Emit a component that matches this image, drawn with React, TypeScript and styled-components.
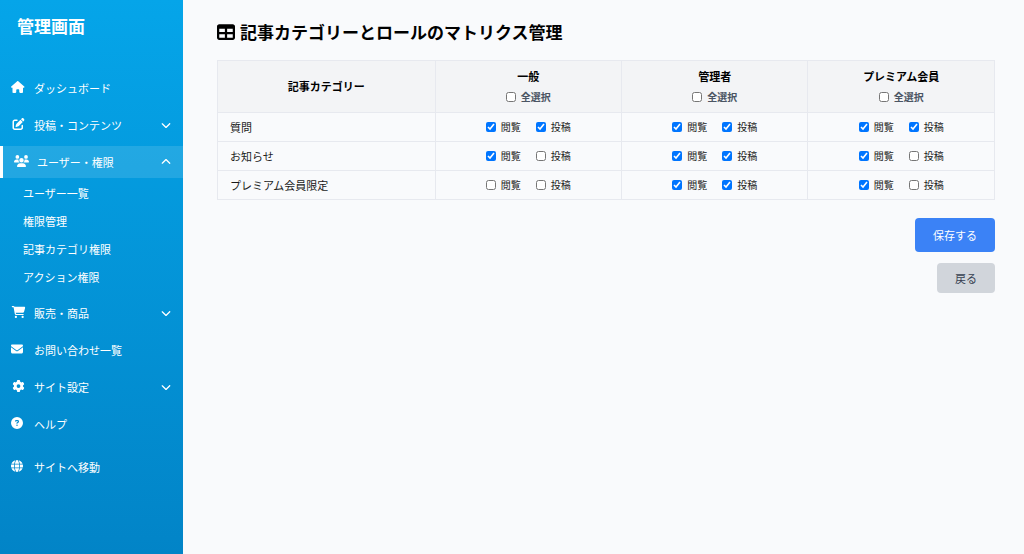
import React, { useState } from "react";
import styled, { createGlobalStyle, css } from "styled-components";
import type { IconType } from "react-icons";
import {
  FaHouse,
  FaPenToSquare,
  FaUsers,
  FaCartShopping,
  FaEnvelope,
  FaGear,
  FaCircleQuestion,
  FaGlobe,
  FaChevronDown,
  FaChevronUp,
  FaTable,
} from "react-icons/fa6";

const GlobalStyle = createGlobalStyle`
  *, *::before, *::after { box-sizing: border-box; }
  body {
    margin: 0;
    background: #f9fafc;
    color: #000;
    font-family: "Noto Sans CJK JP", sans-serif;
    font-size: 11px;
  }
  button { font-family: inherit; }
`;

const Page = styled.div`
  display: flex;
  min-height: 100vh;
`;

const Sidebar = styled.aside`
  flex: 0 0 183px;
  background: linear-gradient(to bottom, #05a5e9, #0284c7);
  color: #fff;
`;

const Brand = styled.div`
  padding: 14px 17px 34px;
  font-size: 17px;
  line-height: 24px;
  font-weight: 700;
`;

const Nav = styled.nav`
  display: flex;
  flex-direction: column;
  gap: 5px;
`;

const itemStyle = css`
  display: flex;
  align-items: center;
  width: 100%;
  height: 32px;
  padding: 0 12px 0 11px;
  color: #fff;
  font-size: 11px;
  line-height: 16px;
  text-align: left;
  text-decoration: none;
`;

const NavLink = styled.a<{ $apart?: boolean }>`
  ${itemStyle}
  margin-top: ${(p) => (p.$apart ? "6px" : "0")};
`;

const NavToggle = styled.button<{ $open: boolean }>`
  ${itemStyle}
  border: 0;
  border-left: ${(p) => (p.$open ? "3px solid #fff" : "0")};
  background: ${(p) => (p.$open ? "rgba(255, 255, 255, 0.12)" : "transparent")};
  cursor: pointer;
`;

const IconBox = styled.span`
  display: flex;
  width: 15px;
  margin: 0 8px 2px 0;

  svg {
    flex: none;
    width: 15px;
    height: 12px;
  }
`;

const ItemLabel = styled.span`
  flex: 1;
`;

const Chevron = styled.span`
  display: flex;

  svg {
    width: 10px;
    height: 10px;
  }
`;

const SubList = styled.ul`
  margin: 0;
  padding: 1px 0;
  list-style: none;
`;

const SubLink = styled.a`
  display: block;
  padding: 6px 23px;
  color: #fff;
  line-height: 16px;
  text-decoration: none;
`;

const Main = styled.main`
  flex: 1;
  min-width: 0;
  padding: 20px 29px 20px 34px;
`;

const Title = styled.h1`
  display: flex;
  align-items: center;
  gap: 5px;
  margin: 0 0 16px;
  font-size: 17px;
  line-height: 24px;
  font-weight: 700;
`;

const Matrix = styled.table`
  width: 100%;
  border-collapse: collapse;
  table-layout: fixed;
`;

const HeadCell = styled.th<{ $wide?: boolean }>`
  width: ${(p) => (p.$wide ? "28%" : "24%")};
  padding: 6px 12px 8px;
  border: 1px solid #e7e9ef;
  background: #f3f4f6;
  font-size: 11px;
  line-height: 18px;
  font-weight: 700;
`;

const NameCell = styled.th`
  padding: 6px 12px;
  border: 1px solid #e7e9ef;
  color: #1a1a1a;
  font-size: 11px;
  line-height: 16px;
  font-weight: 400;
  text-align: left;
`;

const Cell = styled.td`
  padding: 6px 12px;
  border: 1px solid #e7e9ef;
`;

const Checks = styled.div`
  display: flex;
  justify-content: center;
  gap: 15px;
`;

const CheckLabel = styled.label<{ $muted?: boolean }>`
  display: flex;
  align-items: center;
  justify-content: center;
  gap: 5px;
  margin-top: ${(p) => (p.$muted ? "5px" : "0")};
  color: ${(p) => (p.$muted ? "#4b5563" : "#1a1a1a")};
  font-size: 10px;
  line-height: ${(p) => (p.$muted ? "14px" : "16px")};
`;

const Checkbox = styled.input`
  width: 10px;
  height: 10px;
  margin: 0;
`;

const Actions = styled.div`
  display: flex;
  flex-direction: column;
  align-items: flex-end;
  gap: 11px;
  margin-top: 18px;
`;

const Button = styled.button<{ $primary?: boolean }>`
  padding: ${(p) => (p.$primary ? "9px 18px" : "7px 18px")};
  border: 0;
  border-radius: 4px;
  background: ${(p) => (p.$primary ? "#3b82f6" : "#d1d5db")};
  color: ${(p) => (p.$primary ? "#fff" : "#374151")};
  font-size: 11px;
  line-height: 16px;
  cursor: pointer;
`;

type NavItem = {
  label: string;
  icon: IconType;
  children?: string[];
  expandable?: boolean;
  apart?: boolean;
};

const navItems: NavItem[] = [
  { label: "ダッシュボード", icon: FaHouse },
  { label: "投稿・コンテンツ", icon: FaPenToSquare, expandable: true },
  {
    label: "ユーザー・権限",
    icon: FaUsers,
    expandable: true,
    children: ["ユーザー一覧", "権限管理", "記事カテゴリ権限", "アクション権限"],
  },
  { label: "販売・商品", icon: FaCartShopping, expandable: true },
  { label: "お問い合わせ一覧", icon: FaEnvelope },
  { label: "サイト設定", icon: FaGear, expandable: true },
  { label: "ヘルプ", icon: FaCircleQuestion },
  { label: "サイトへ移動", icon: FaGlobe, apart: true },
];

const roles = ["一般", "管理者", "プレミアム会員"];
const categories = ["質問", "お知らせ", "プレミアム会員限定"];
const permissions = ["閲覧", "投稿"];

// initial[category][role] = [view, post]
const initial: boolean[][][] = [
  [[true, true], [true, true], [true, true]],
  [[true, false], [true, true], [true, false]],
  [[false, false], [true, true], [true, false]],
];

function NavEntry({ item }: { item: NavItem }) {
  const [open, setOpen] = useState(Boolean(item.children));
  const Icon = item.icon;

  if (!item.expandable) {
    return (
      <NavLink href="#" $apart={item.apart}>
        <IconBox><Icon preserveAspectRatio="xMinYMid meet" /></IconBox>
        <ItemLabel>{item.label}</ItemLabel>
      </NavLink>
    );
  }

  return (
    <div>
      <NavToggle type="button" $open={open} aria-expanded={open} onClick={() => setOpen(!open)}>
        <IconBox><Icon /></IconBox>
        <ItemLabel>{item.label}</ItemLabel>
        <Chevron>{open ? <FaChevronUp /> : <FaChevronDown />}</Chevron>
      </NavToggle>
      {open && item.children && (
        <SubList>
          {item.children.map((child) => (
            <li key={child}><SubLink href="#">{child}</SubLink></li>
          ))}
        </SubList>
      )}
    </div>
  );
}

export default function App() {
  const [grants, setGrants] = useState(initial);
  const [selectAll, setSelectAll] = useState(roles.map(() => false));

  const toggle = (c: number, r: number, p: number) =>
    setGrants(grants.map((row, i) =>
      row.map((cell, j) => cell.map((v, k) => (i === c && j === r && k === p ? !v : v)))));

  const toggleAll = (r: number) => {
    const next = !selectAll[r];
    setSelectAll(selectAll.map((v, i) => (i === r ? next : v)));
    setGrants(grants.map((row) => row.map((cell, j) => (j === r ? cell.map(() => next) : cell))));
  };

  return (
    <Page>
      <GlobalStyle />
      <Sidebar>
        <Brand>管理画面</Brand>
        <Nav>
          {navItems.map((item) => <NavEntry key={item.label} item={item} />)}
        </Nav>
      </Sidebar>
      <Main>
        <Title>
          <FaTable size={18} />
          記事カテゴリーとロールのマトリクス管理
        </Title>
        <Matrix>
          <thead>
            <tr>
              <HeadCell $wide scope="col">記事カテゴリー</HeadCell>
              {roles.map((role, r) => (
                <HeadCell key={role} scope="col">
                  {role}
                  <CheckLabel $muted>
                    <Checkbox type="checkbox" checked={selectAll[r]} onChange={() => toggleAll(r)} />
                    全選択
                  </CheckLabel>
                </HeadCell>
              ))}
            </tr>
          </thead>
          <tbody>
            {categories.map((category, c) => (
              <tr key={category}>
                <NameCell scope="row">{category}</NameCell>
                {roles.map((role, r) => (
                  <Cell key={role}>
                    <Checks>
                      {permissions.map((permission, p) => (
                        <CheckLabel key={permission}>
                          <Checkbox
                            type="checkbox"
                            checked={grants[c][r][p]}
                            onChange={() => toggle(c, r, p)}
                          />
                          {permission}
                        </CheckLabel>
                      ))}
                    </Checks>
                  </Cell>
                ))}
              </tr>
            ))}
          </tbody>
        </Matrix>
        <Actions>
          <Button type="button" $primary>保存する</Button>
          <Button type="button">戻る</Button>
        </Actions>
      </Main>
    </Page>
  );
}
